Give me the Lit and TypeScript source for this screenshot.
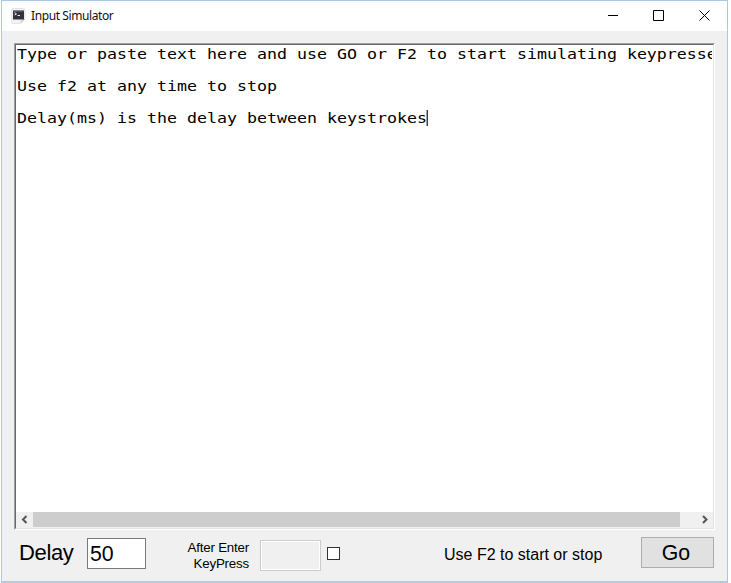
import { LitElement, html, css } from "lit";
import { customElement } from "lit/decorators.js";

@customElement("app-root")
export class AppRoot extends LitElement {
  static styles = css`
    :host { display: block; width: 731px; height: 583px; background: #fff; overflow: hidden; color: #000; font-family: "Liberation Sans", Arial, sans-serif; }
    * { box-sizing: border-box; }
    svg { display: block; }
    .window { width: 727px; height: 583px; margin-left: 1px; border: 1px solid #a9c8e8; border-bottom: 2px solid #b6c8d9; background: #f0f0f0; display: flex; flex-direction: column; }
    .title { height: 30px; flex: none; background: #fff; display: flex; align-items: center; padding-left: 9px; font: 12px/16px "Noto Sans", sans-serif; }
    .name { margin-left: 5px; flex: 1; font-size: 12px; letter-spacing: -0.4px; color: #111; }
    .controls { display: flex; width: 138px; }
    .controls svg { width: 46px; height: 30px; }
    .editor { margin: 12px 0 0 12px; width: 701px; height: 487px; flex: none; background: #fff; display: flex; flex-direction: column; border: 1px solid; border-color: #a0a0a0 #fff #fff #a0a0a0; }
    .inner { flex: 1; display: flex; flex-direction: column; min-height: 0; border: 1px solid; border-color: #696969 #e3e3e3 #e3e3e3 #696969; }
    .text { flex: 1; overflow: hidden; padding-top: 1px; margin: 0 1px; font: 14.8px/16px "DejaVu Sans Mono", monospace; white-space: pre; }
    .line { height: 32px; display: flex; transform: scaleX(1.1223); transform-origin: 0 0; }
    .caret { width: 1px; height: 16px; background: #000; }
    .scroll { height: 16px; background: #f0f0f0; display: flex; flex: none; }
    .thumb { width: 647px; height: 15px; background: #cdcdcd; }
    .bar { display: flex; flex: 1; align-items: flex-start; padding: 7px 0 0 17px; }
    .delay { font-size: 22px; line-height: 25px; width: 68px; padding-top: 3px; letter-spacing: -0.35px; white-space: nowrap; }
    .field { width: 59px; height: 31px; margin-top: 1px; background: #fff; border: 1px solid #7a7a7a; font-size: 21.3px; line-height: 30px; padding-left: 2px; }
    .after { width: 62px; margin: 3px 0 0 41px; text-align: right; font-size: 13.33px; line-height: 16px; letter-spacing: -0.2px; white-space: nowrap; }
    .off { width: 61px; height: 31px; margin: 3px 0 0 11px; background: #f0f0f0; border: 1px solid #ccc; box-shadow: inset 0 0 0 1px #fff; }
    .check { width: 13px; height: 13px; margin: 10px 0 0 6px; border: 1px solid #333; background: #fff; }
    .hint { margin: 9px 0 0 104px; width: 197px; font-size: 16px; line-height: 18px; white-space: nowrap; }
    .go { width: 73px; height: 31px; background: #e1e1e1; border: 1px solid #adadad; text-align: center; font-size: 21.3px; line-height: 30px; padding-right: 3px; }
  `;

  render() {
    return html`<div class="window">
      <div class="title">
        <svg width="15" height="16" viewBox="0 0 15 16">
          <path d="M.5 2Q.5.5 2 .5H12.5Q14 .5 14 2V11L10 15.5H2Q.5 15.5.5 14Z" fill="#f3f3f3" stroke="#e4e4e4"/>
          <path d="M10 14.5L10.5 12L13.5 11.5Z" fill="#fff" stroke="#bbb" stroke-width=".7"/>
          <rect x="2" y="2.5" width="11" height="9" fill="#30343a"/>
          <path d="M2.5 3H12.5" stroke="#777"/>
          <path d="M3.5 4.5L5.5 6L3.5 7M6.5 7.5H9" fill="none" stroke="#fff" stroke-width=".9"/>
        </svg>
        <span class="name">Input Simulator</span>
        <div class="controls">
          ${["M19 14.5H29", "M18.5 9.5H28.5V19.5H18.5Z", "M18.5 9.5L28.5 19.5M28.5 9.5L18.5 19.5"].map(
            (d) => html`<svg viewBox="0 0 46 30"><path d=${d} fill="none" stroke="#000"/></svg>`
          )}
        </div>
      </div>
      <div class="editor"><div class="inner">
        <div class="text"><div class="line">Type or paste text here and use GO or F2 to start simulating keypresses</div><div class="line">Use f2 at any time to stop</div><div class="line">Delay(ms) is the delay between keystrokes<span class="caret"></span></div></div>
        <div class="scroll">
          <svg width="17" height="15"><path d="M10.5 4L7 7.5L10.5 11" fill="none" stroke="#555" stroke-width="2"/></svg>
          <div class="thumb"></div>
          <svg width="33" height="15"><path d="M23 4L26.5 7.5L23 11" fill="none" stroke="#555" stroke-width="2"/></svg>
        </div>
      </div></div>
      <div class="bar">
        <div class="delay">Delay</div>
        <div class="field">50</div>
        <div class="after">After Enter<br>KeyPress</div>
        <div class="off"></div>
        <div class="check"></div>
        <div class="hint">Use F2 to start or stop</div>
        <div class="go">Go</div>
      </div>
    </div>`;
  }
}
